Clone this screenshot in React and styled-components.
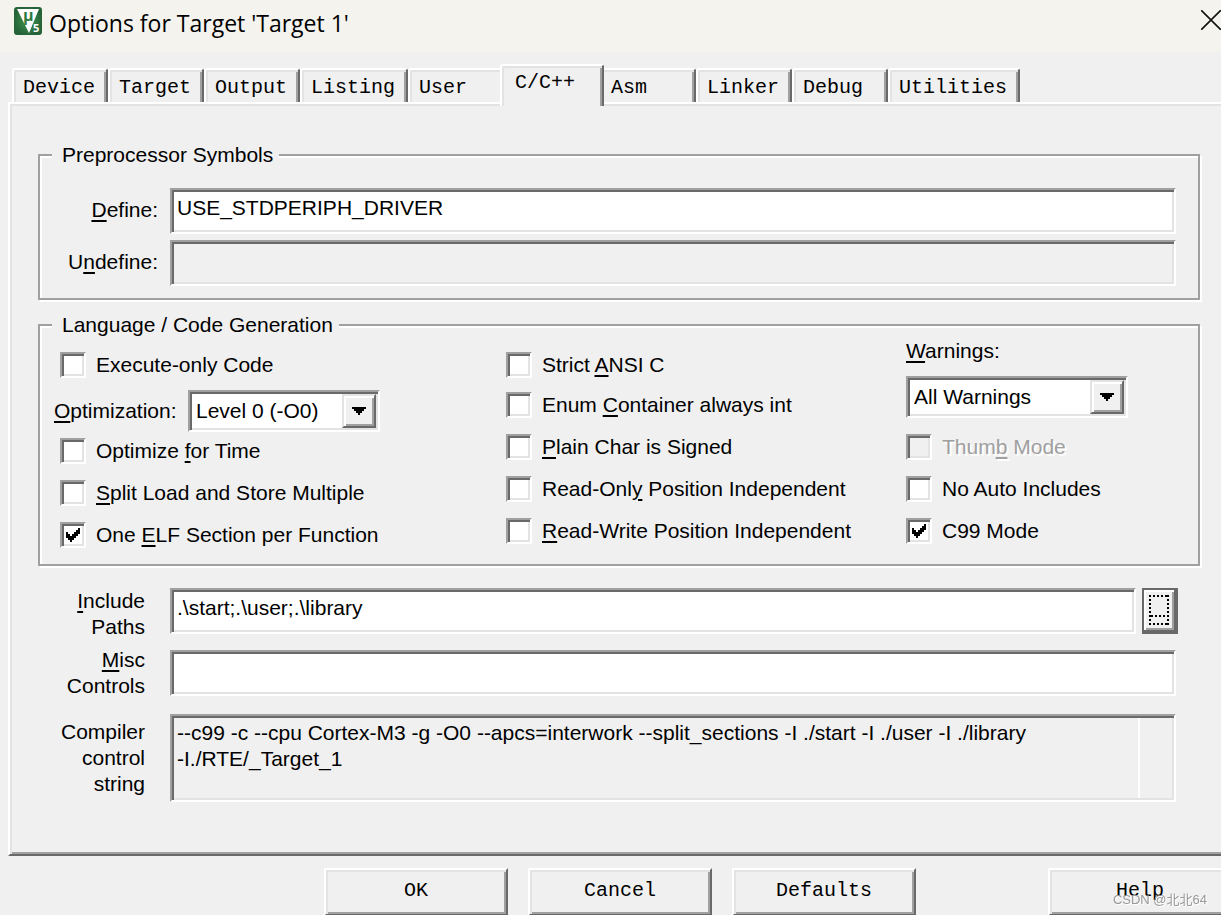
import React from 'react';
import styled, { createGlobalStyle, css } from 'styled-components';

const Global = createGlobalStyle`
  *, *::before, *::after { box-sizing: border-box; }
  body { margin: 0; background: #f0f0f0; overflow: hidden; }
  u { text-decoration-thickness: 2px; text-underline-offset: 3px; }
`;

const uiFont = css`
  font-family: 'Liberation Sans', Arial, sans-serif;
  font-size: 21px;
  line-height: 26px;
  color: #000;
`;

const raster = css`
  font-family: 'Liberation Mono', monospace;
  font-size: 20px;
  line-height: 24px;
  color: #000;
`;

const sunken = css`
  border: 2px solid;
  border-color: #a0a0a0 #fff #fff #a0a0a0;
  border-radius: 0;
  box-shadow: inset 2px 2px #696969, inset -2px -2px #e3e3e3;
`;

const raised = css`
  border: 2px solid;
  border-color: #fff #696969 #696969 #fff;
  border-radius: 0;
  box-shadow: inset 2px 2px #e3e3e3, inset -2px -2px #a0a0a0;
  background: #f0f0f0;
`;

const Dialog = styled.div`
  ${uiFont}
  height: 100vh;
  overflow: hidden;
  display: flex;
  flex-direction: column;
  background: #f0f0f0;
`;

const TitleBar = styled.header`
  flex: none;
  display: flex;
  align-items: flex-start;
  gap: 7px;
  height: 52px;
  padding: 7px 0 0 14px;
  background: #f4f3ee;
`;

const Title = styled.h1`
  flex: 1;
  margin: 0;
  font: 400 23px/32px 'Open Sans', 'Noto Sans', sans-serif;
  white-space: nowrap;
`;

const LogoMark = styled.svg`
  display: block;
  overflow: visible;
`;

const CloseButton = styled.button`
  display: flex;
  padding: 3px 0 0;
  border: 0;
  background: none;
`;

const Tabs = styled.nav`
  flex: none;
  display: flex;
  align-items: flex-end;
  height: 50px;
  padding-left: 12px;
`;

const Tab = styled.button`
  ${raster}
  min-width: 96px;
  height: 34px;
  padding: 4px 11px 0 9px;
  text-align: left;
  white-space: nowrap;
  border: 2px solid;
  border-color: #fff #696969 #fff #fff;
  border-bottom: 0;
  border-radius: 3px 3px 0 0;
  background: #f0f0f0;
  box-shadow: inset 2px 2px #e3e3e3, inset -2px 0 #a0a0a0;
  ${(p) => p.$active && css`
    position: relative;
    z-index: 1;
    width: 104px;
    height: 42px;
    margin: 0 -4px -4px;
    padding: 0 11px 6px 13px;
  `}
`;

const Page = styled.main`
  flex: none;
  margin-left: 8px;
  padding: 38px 21px 52px 28px;
  border: solid;
  border-width: 2px 0 2px 2px;
  border-color: #fff #fff #696969 #fff;
  box-shadow: inset 2px 2px #e3e3e3, inset 0 -2px #a0a0a0;
`;

const Group = styled.fieldset`
  min-width: 0;
  margin: 0;
  padding: 0;
  border: 2px solid #a0a0a0;
  box-shadow: inset 2px 2px #fff, 2px 2px #fff;
  & + & { margin-top: 12px; }
`;

const Legend = styled.legend`
  margin-left: 12px;
  padding: 0 6px 0 10px;
  background: #f0f0f0;
`;

const SymbolRows = styled.div`
  display: grid;
  grid-template-columns: 118px 1fr;
  gap: 6px 12px;
  align-items: center;
  padding: 20px 22px 12px 0;
  > label { padding-bottom: 2px; }
`;

const FieldLabel = styled.label`
  text-align: right;
`;

const TextField = styled.input`
  ${uiFont}
  ${sunken}
  display: block;
  width: 100%;
  min-width: 0;
  height: 46px;
  padding: 0 5px 6px;
  outline: 0;
  background: #fff;
  &:disabled { background: #f0f0f0; }
`;

const OptionGrid = styled.div`
  display: grid;
  grid-template-columns: 446px 400px 1fr;
  padding: 0 0 16px 20px;
`;

const Column = styled.div`
  display: flex;
  flex-direction: column;
  gap: 16px;
  padding-top: ${(p) => p.$top || 0}px;
`;

const ColumnHead = styled.div`
  display: flex;
  flex-direction: column;
  gap: ${(p) => p.$gap}px;
  margin-bottom: ${(p) => p.$after || 0}px;
`;

const CheckRow = styled.label`
  display: flex;
  align-items: center;
  gap: 10px;
  height: 26px;
  white-space: nowrap;
  ${(p) => p.$disabled && css`
    color: #a0a0a0;
    text-shadow: 2px 2px #fff;
  `}
`;

const CheckFrame = styled.span`
  display: grid;
  flex: none;
  width: 26px;
  height: 26px;
  > * { grid-area: 1 / 1; }
  > svg { place-self: center; pointer-events: none; }
`;

const CheckInput = styled.input`
  ${sunken}
  appearance: none;
  width: 26px;
  height: 26px;
  margin: 0;
  background: #fff;
  &:disabled { background: #f0f0f0; }
  & + svg { visibility: hidden; }
  &:checked + svg { visibility: visible; }
`;

const LevelRow = styled.div`
  display: flex;
  align-items: center;
  margin-left: -6px;
  > label { flex: 0 0 134px; }
`;

const SelectFrame = styled.div`
  ${sunken}
  display: flex;
  width: ${(p) => p.$width}px;
  height: 42px;
  padding: 2px;
  background: #fff;
`;

const Select = styled.select`
  ${uiFont}
  flex: 1;
  min-width: 0;
  padding: 0 4px;
  appearance: none;
  border: 0;
  outline: 0;
  background: #fff;
`;

const Arrow = styled.span`
  display: grid;
  place-items: center;
  width: 34px;
  border: 2px solid;
  border-color: #e3e3e3 #696969 #696969 #e3e3e3;
  box-shadow: inset 2px 2px #fff, inset -2px -2px #a0a0a0;
  background: #f0f0f0;
`;

const PathRows = styled.div`
  display: grid;
  grid-template-columns: 107px 1fr;
  column-gap: 25px;
  align-items: center;
  padding: 22px 24px 0 0;
`;

const PathRow = styled.div`
  display: flex;
  align-self: start;
  gap: 6px;
  margin-right: -2px;
`;

const Spacer = styled.div`
  grid-column: 1 / -1;
  height: ${(p) => p.$h}px;
`;

const BrowseButton = styled.button`
  ${uiFont}
  flex: none;
  width: 36px;
  height: 46px;
  padding: 2px;
  border: 2px solid #696969;
  border-right-width: 4px;
  border-bottom-width: 4px;
  background: #f0f0f0;
  box-shadow: inset 2px 2px #fff, inset -2px -2px #a0a0a0;
  display: grid;
  place-items: center;
`;

const OutputFrame = styled.div`
  ${sunken}
  display: flex;
  height: 88px;
  padding: 2px;
`;

const OutputText = styled.textarea`
  ${uiFont}
  flex: 1;
  min-width: 0;
  padding: 2px 3px;
  border: 0;
  outline: 0;
  resize: none;
  overflow: hidden;
  background: transparent;
`;

const ScrollTrack = styled.span`
  width: 34px;
  border-left: 2px solid #fff;
`;

const Footer = styled.footer`
  flex: none;
  display: flex;
  gap: 20px;
  padding: 12px 0 0 324px;
`;

const PushButton = styled.button`
  ${raster}
  ${raised}
  flex: none;
  width: 184px;
  height: 48px;
  padding: 0 0 2px;
  &:last-of-type { margin: 0 -11px 0 auto; }
`;

const Watermark = styled.span`
  position: fixed;
  right: 14px;
  bottom: 6px;
  font: 13px/18px 'Liberation Sans', 'Noto Sans CJK SC', sans-serif;
  color: #999;
  text-shadow: 1px 1px #fff;
  pointer-events: none;
`;

const Tick = () => (
  <svg width="14" height="14" viewBox="0 0 14 14" fill="#000" aria-hidden="true">
    <path d="M0 4h2v2h2v2h2V6h2V4h2V2h2V0h2v6h-2v2h-2v2H8v2H6v2H4v-2H2v-2H0z" />
  </svg>
);

const Check = ({ children, ...rest }) => (
  <CheckRow $disabled={rest.disabled}>
    <CheckFrame>
      <CheckInput type="checkbox" {...rest} />
      <Tick />
    </CheckFrame>
    <span>{children}</span>
  </CheckRow>
);

const DropDown = ({ id, width, value }) => (
  <SelectFrame $width={width}>
    <Select id={id} defaultValue={value}>
      <option>{value}</option>
    </Select>
    <Arrow>
      <svg width="14" height="8" viewBox="0 0 14 8" aria-hidden="true">
        <path d="M0 0h14v2h-2v2h-2v2H8v2H6V6H4V4H2V2H0z" />
      </svg>
    </Arrow>
  </SelectFrame>
);

const Logo = () => (
  <LogoMark width="28" height="28" viewBox="0 0 28 28" aria-hidden="true">
    <defs>
      <radialGradient id="green">
        <stop offset="0" stopColor="#3f9a50" />
        <stop offset="1" stopColor="#276339" />
      </radialGradient>
    </defs>
    <rect width="28" height="28" rx="3" fill="url(#green)" />
    <path d="M3 2h22L15 26z" fill="#fff" />
    <text x="9" y="14" fontFamily="Open Sans" fontWeight="700" fontSize="16" fill="#2f7a42">μ</text>
    <text x="19" y="25" fontFamily="Open Sans" fontWeight="700" fontSize="11" fill="#fff">5</text>
  </LogoMark>
);

const tabs = ['Device', 'Target', 'Output', 'Listing', 'User', 'C/C++', 'Asm', 'Linker', 'Debug', 'Utilities'];

export default function App() {
  return (
    <Dialog>
      <Global />
      <TitleBar>
        <Logo />
        <Title>Options for Target 'Target 1'</Title>
        <CloseButton aria-label="Close">
          <svg width="20" height="20" viewBox="0 0 20 20" stroke="#111" strokeWidth="1.6" aria-hidden="true">
            <path d="M0 0l20 20M20 0L0 20" />
          </svg>
        </CloseButton>
      </TitleBar>
      <Tabs>
        {tabs.map((t) => <Tab key={t} $active={t === 'C/C++'}>{t}</Tab>)}
      </Tabs>
      <Page>
        <Group>
          <Legend>Preprocessor Symbols</Legend>
          <SymbolRows>
            <FieldLabel htmlFor="define"><u>D</u>efine:</FieldLabel>
            <TextField id="define" defaultValue="USE_STDPERIPH_DRIVER" />
            <FieldLabel htmlFor="undefine">U<u>n</u>define:</FieldLabel>
            <TextField id="undefine" disabled />
          </SymbolRows>
        </Group>
        <Group>
          <Legend>Language / Code Generation</Legend>
          <OptionGrid>
            <Column $top={14}>
              <ColumnHead $gap={12} $after={-10}>
                <Check>Execute-only Code</Check>
                <LevelRow>
                  <label htmlFor="level"><u>O</u>ptimization:</label>
                  <DropDown id="level" width={192} value="Level 0 (-O0)" />
                </LevelRow>
              </ColumnHead>
              <Check>Optimize <u>f</u>or Time</Check>
              <Check><u>S</u>plit Load and Store Multiple</Check>
              <Check defaultChecked>One <u>E</u>LF Section per Function</Check>
            </Column>
            <Column $top={14}>
              <ColumnHead $gap={14}>
                <Check>Strict <u>A</u>NSI C</Check>
                <Check>Enum <u>C</u>ontainer always int</Check>
              </ColumnHead>
              <Check><u>P</u>lain Char is Signed</Check>
              <Check>Read-Onl<u>y</u> Position Independent</Check>
              <Check><u>R</u>ead-Write Position Independent</Check>
            </Column>
            <Column>
              <ColumnHead $gap={12}>
                <label htmlFor="warnings"><u>W</u>arnings:</label>
                <DropDown id="warnings" width={222} value="All Warnings" />
              </ColumnHead>
              <Check disabled>Thum<u>b</u> Mode</Check>
              <Check>No Auto Includes</Check>
              <Check defaultChecked>C99 Mode</Check>
            </Column>
          </OptionGrid>
        </Group>
        <PathRows>
          <FieldLabel htmlFor="include"><u>I</u>nclude<br />Paths</FieldLabel>
          <PathRow>
            <TextField id="include" defaultValue=".\start;.\user;.\library" />
            <BrowseButton aria-label="Browse include paths">
              <svg width="20" height="30" viewBox="0 0 20 30" fill="none" stroke="#000" strokeWidth="2" strokeDasharray="2 2" aria-hidden="true">
                <path d="M0 1h20M0 29h20M1 0v30M19 0v30M2 21h16" />
              </svg>
            </BrowseButton>
          </PathRow>
          <Spacer $h={7} />
          <FieldLabel htmlFor="misc"><u>M</u>isc<br />Controls</FieldLabel>
          <TextField id="misc" />
          <Spacer $h={15} />
          <FieldLabel htmlFor="control">Compiler<br />control<br />string</FieldLabel>
          <OutputFrame>
            <OutputText
              id="control"
              readOnly
              value={'--c99 -c --cpu Cortex-M3 -g -O0 --apcs=interwork --split_sections -I ./start -I ./user -I ./library\n-I./RTE/_Target_1'}
            />
            <ScrollTrack />
          </OutputFrame>
        </PathRows>
      </Page>
      <Footer>
        <PushButton>OK</PushButton>
        <PushButton>Cancel</PushButton>
        <PushButton>Defaults</PushButton>
        <PushButton>Help</PushButton>
      </Footer>
      <Watermark>CSDN @北北64</Watermark>
    </Dialog>
  );
}
